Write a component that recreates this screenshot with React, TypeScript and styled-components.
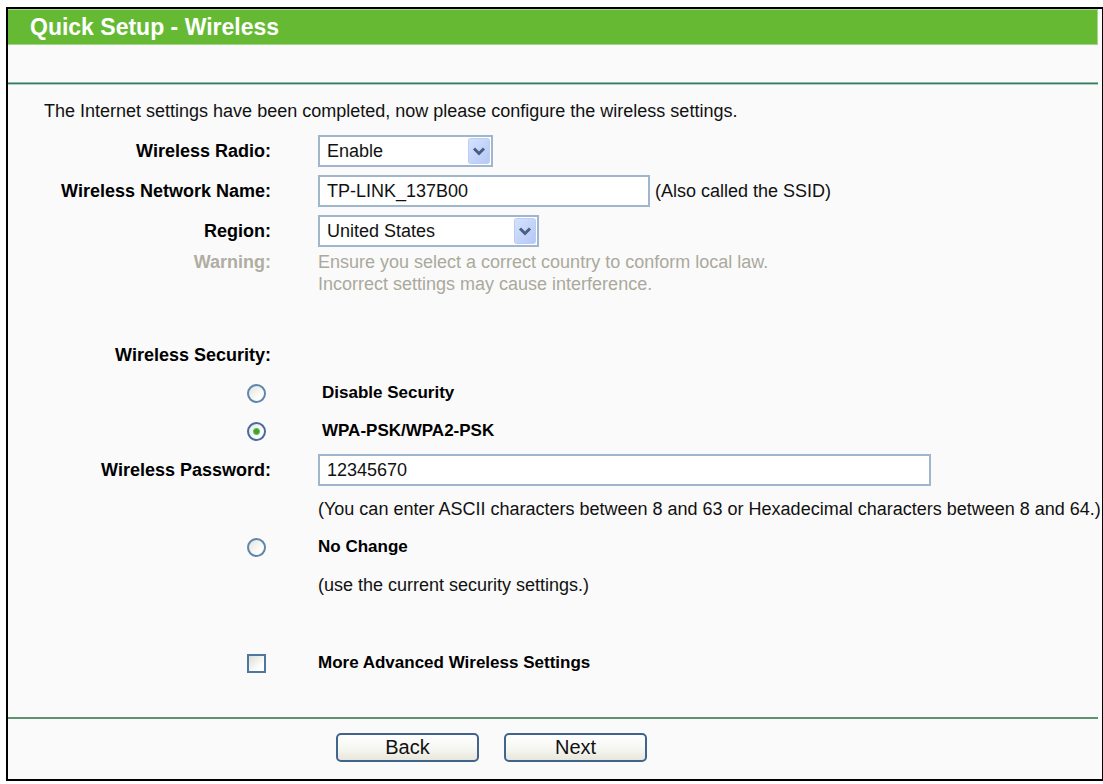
import React, { useState } from "react";
import styled, { createGlobalStyle } from "styled-components";

const GlobalStyle = createGlobalStyle`
  * { box-sizing: border-box; }
  body {
    margin: 0;
    background: #ffffff;
    color: #111111;
    font-family: "Liberation Sans", Arial, sans-serif;
    font-size: 18px;
    line-height: 22px;
  }
`;

const Frame = styled.main`
  margin: 7px 0 0 6px;
  padding-right: 4px;
  border: 2px solid #000000;
  border-right-width: 1px;
  background: #fafafa;
`;

const TitleBar = styled.h1`
  margin: 0;
  height: 36px;
  padding: 0 22px;
  border: 1px solid #a3d58a;
  border-left: 0;
  background: #66ba33;
  color: #ffffff;
  font-size: 23px;
  line-height: 34px;
  font-weight: bold;
`;

const Rule = styled.hr<{ $top?: number }>`
  height: 3px;
  margin: ${(p) => p.$top ?? 0}px 0 0;
  border: 0;
  background: linear-gradient(#86bfa3 0 1px, #3f7468 1px 2px, #a9d6bf 2px 3px);
`;

const FootRule = styled(Rule)`
  height: 2px;
  background: #5c9473;
`;

const Intro = styled.p`
  margin: 0;
  padding: 15px 36px 9px;
  white-space: nowrap;
`;

const Row = styled.div<{ $height?: number; $after?: number; $top?: boolean }>`
  display: grid;
  grid-template-columns: 263px minmax(0, 1fr);
  column-gap: 47px;
  align-items: ${(p) => (p.$top ? "start" : "center")};
  min-height: ${(p) => p.$height ?? 38}px;
  margin-bottom: ${(p) => p.$after ?? 0}px;
  white-space: nowrap;
`;

const Lead = styled.div`
  display: flex;
  justify-content: flex-end;
`;

const Mark = styled(Lead)`
  padding-right: 5px;
`;

const Body = styled.div<{ $indent?: boolean }>`
  display: flex;
  align-items: center;
  gap: 5px;
  padding-left: ${(p) => (p.$indent ? 4 : 0)}px;
  grid-column: 2;
`;

const BoldLabel = styled.label`
  font-weight: bold;
  color: #000000;
`;

const OptionLabel = styled(BoldLabel)`
  font-size: 17px;
`;

const Heading = styled.span`
  font-weight: bold;
  color: #000000;
`;

const WarningTitle = styled(Heading)`
  color: #b0aea2;
`;

const WarningText = styled.p`
  margin: 0;
  color: #aaa99c;
`;

const TextBox = styled.input<{ $width: number }>`
  width: ${(p) => p.$width}px;
  height: 32px;
  padding: 0 7px;
  border: 2px solid #9fb6cd;
  border-radius: 0;
  background: #ffffff;
  color: #111111;
  font: 18px "Liberation Sans", Arial, sans-serif;
  outline: none;
`;

const SelectWrap = styled.div<{ $width: number }>`
  display: grid;
  grid-template-columns: minmax(0, 1fr);
  align-items: center;
  width: ${(p) => p.$width}px;
`;

const SelectBox = styled.select`
  grid-area: 1 / 1;
  width: 100%;
  height: 32px;
  padding: 0 7px;
  appearance: none;
  border: 2px solid #9fb6cd;
  border-radius: 0;
  background: #ffffff;
  color: #111111;
  font: 18px "Liberation Sans", Arial, sans-serif;
  outline: none;
`;

const DropArrow = styled.svg`
  grid-area: 1 / 1;
  justify-self: end;
  width: 22px;
  height: 26px;
  margin-right: 3px;
  pointer-events: none;
`;

const Radio = styled.input`
  width: 19px;
  height: 19px;
  margin: 0;
  appearance: none;
  border: 2px solid #5f86ab;
  border-radius: 50%;
  background: linear-gradient(135deg, #e2e2dc, #ffffff 75%);

  &:checked {
    border-color: #4a6b9c;
    background:
      radial-gradient(circle, #3da32f 0 2px, #62bd55 3px, transparent 4px),
      linear-gradient(135deg, #e6e8e2, #ffffff 75%);
  }
`;

const Checkbox = styled.input`
  width: 19px;
  height: 19px;
  margin: 0;
  appearance: none;
  border: 2px solid #4f769e;
  border-radius: 0;
  background: linear-gradient(135deg, #deded8, #ffffff 75%);

  &:checked {
    background: #3da32f;
  }
`;

const Footer = styled.footer`
  display: flex;
  gap: 25px;
  padding: 14px 0 17px 328px;
`;

const Button = styled.button`
  width: 143px;
  height: 29px;
  padding: 0;
  border: 2px solid #41648d;
  border-radius: 5px;
  background: linear-gradient(#ffffff, #f5f5f0 60%, #e6e6dc);
  color: #111111;
  font: 20px "Liberation Sans", Arial, sans-serif;
`;

function Dropdown({ id, width, options }: { id: string; width: number; options: string[] }) {
  return (
    <SelectWrap $width={width}>
      <SelectBox id={id}>
        {options.map((option) => (
          <option key={option}>{option}</option>
        ))}
      </SelectBox>
      <DropArrow viewBox="0 0 22 26" aria-hidden="true">
        <defs>
          <linearGradient id={`${id}-face`} x1="0" y1="0" x2="1" y2="1">
            <stop offset="0" stopColor="#d6e2fd" />
            <stop offset="1" stopColor="#b4c8f6" />
          </linearGradient>
        </defs>
        <rect x="0.5" y="0.5" width="21" height="25" rx="2" fill={`url(#${id}-face)`} stroke="#bccdf5" />
        <path d="M6 10.5 L11 15.5 L16 10.5" fill="none" stroke="#485f85" strokeWidth="3" />
      </DropArrow>
    </SelectWrap>
  );
}

export default function App() {
  const [security, setSecurity] = useState("wpa");
  const radio = (value: string) => (
    <Radio
      type="radio"
      name="security"
      id={value}
      checked={security === value}
      onChange={() => setSecurity(value)}
    />
  );

  return (
    <>
      <GlobalStyle />
      <Frame>
        <TitleBar>Quick Setup - Wireless</TitleBar>
        <Rule $top={37} />
        <Intro>The Internet settings have been completed, now please configure the wireless settings.</Intro>

        <Row $height={40}>
          <Lead><BoldLabel htmlFor="wireless-radio">Wireless Radio:</BoldLabel></Lead>
          <Body><Dropdown id="wireless-radio" width={175} options={["Enable", "Disable"]} /></Body>
        </Row>
        <Row $height={40}>
          <Lead><BoldLabel htmlFor="ssid">Wireless Network Name:</BoldLabel></Lead>
          <Body>
            <TextBox id="ssid" type="text" $width={332} defaultValue="TP-LINK_137B00" />
            <span>(Also called the SSID)</span>
          </Body>
        </Row>
        <Row $height={40}>
          <Lead><BoldLabel htmlFor="region">Region:</BoldLabel></Lead>
          <Body><Dropdown id="region" width={221} options={["United States"]} /></Body>
        </Row>
        <Row $height={44} $after={41} $top>
          <Lead><WarningTitle>Warning:</WarningTitle></Lead>
          <WarningText>
            Ensure you select a correct country to conform local law.
            <br />
            Incorrect settings may cause interference.
          </WarningText>
        </Row>

        <Row>
          <Lead><Heading>Wireless Security:</Heading></Lead>
        </Row>
        <Row>
          <Mark>{radio("disabled")}</Mark>
          <Body $indent><OptionLabel htmlFor="disabled">Disable Security</OptionLabel></Body>
        </Row>
        <Row>
          <Mark>{radio("wpa")}</Mark>
          <Body $indent><OptionLabel htmlFor="wpa">WPA-PSK/WPA2-PSK</OptionLabel></Body>
        </Row>
        <Row $height={40}>
          <Lead><BoldLabel htmlFor="password">Wireless Password:</BoldLabel></Lead>
          <Body><TextBox id="password" type="text" $width={613} defaultValue="12345670" /></Body>
        </Row>
        <Row>
          <Body>(You can enter ASCII characters between 8 and 63 or Hexadecimal characters between 8 and 64.)</Body>
        </Row>
        <Row>
          <Mark>{radio("unchanged")}</Mark>
          <Body><OptionLabel htmlFor="unchanged">No Change</OptionLabel></Body>
        </Row>
        <Row $after={40}>
          <Body>(use the current security settings.)</Body>
        </Row>
        <Row>
          <Mark><Checkbox type="checkbox" id="advanced" /></Mark>
          <Body><OptionLabel htmlFor="advanced">More Advanced Wireless Settings</OptionLabel></Body>
        </Row>

        <FootRule $top={35} />
        <Footer>
          <Button type="button">Back</Button>
          <Button type="button">Next</Button>
        </Footer>
      </Frame>
    </>
  );
}
